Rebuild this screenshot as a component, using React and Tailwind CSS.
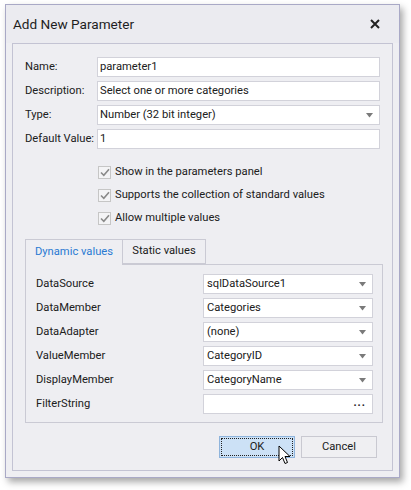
import React from 'react';

const font = { fontFamily: 'Roboto, "Liberation Sans", sans-serif' };

function Arrow() {
  return (
    <svg width="7" height="5" viewBox="0 0 7 5" className="shrink-0">
      <path d="M0 0 H7 L3.5 4.5 Z" fill="#7a7a7a" />
    </svg>
  );
}

function Field({ label, value, combo }) {
  return (
    <div className="flex items-center h-[20px]">
      <div className="w-[72px] shrink-0 whitespace-nowrap">{label}</div>
      <div className="flex-1 h-[20px] bg-white border border-[#d2d2da] flex items-center pl-[2px] pr-[6px]">
        <span className="flex-1">{value}</span>
        {combo && <Arrow />}
      </div>
    </div>
  );
}

function Check({ label }) {
  return (
    <div className="flex items-center h-[22px]">
      <div className="w-[13px] h-[13px] border border-[#c6c6c6] bg-[#f4f4f6] flex items-center justify-center">
        <svg width="10" height="9" viewBox="0 0 10 9">
          <path d="M1 4.5 L3.8 7.3 L9 1.2" stroke="#8a8a8a" strokeWidth="1.6" fill="none" />
        </svg>
      </div>
      <span className="ml-[4px]">{label}</span>
    </div>
  );
}

function Row({ label, value, ellipsis }) {
  return (
    <div className="flex items-center h-[20px]">
      <div className="flex-1">{label}</div>
      <div className="w-[170px] h-[20px] bg-white border border-[#d2d2da] flex items-center pl-[3px] pr-[6px]">
        <span className="flex-1">{value}</span>
        {ellipsis ? (
          <span className="font-bold tracking-[1px] text-[11px] leading-none pb-[4px]">...</span>
        ) : (
          <Arrow />
        )}
      </div>
    </div>
  );
}

export default function App() {
  return (
    <div className="w-[411px] h-[490px] bg-white relative text-[11.2px] text-[#202020]" style={font}>
      <div className="absolute left-[5px] top-[4px] w-[395px] h-[474px] bg-[#eeeef2] border border-[#a9a9c6] shadow-[3px_4px_7px_rgba(0,0,0,0.35)] flex flex-col">
        {/* title bar */}
        <div className="h-[38px] flex items-center pl-[7px] pr-[19px] bg-[#ebebf0]">
          <span className="flex-1 text-[13.6px] text-[#1e1e1e]">Add New Parameter</span>
          <svg width="10" height="10" viewBox="0 0 10 10">
            <path d="M1 1 L9 9 M9 1 L1 9" stroke="#222" strokeWidth="2" />
          </svg>
        </div>
        {/* content panel */}
        <div className="mx-[6px] mb-[6px] flex-1 border border-[#c3c3d3] bg-[#eeeef2] px-[12px] pt-[13px] flex flex-col">
          <div className="flex flex-col gap-[4px]">
            <Field label="Name:" value="parameter1" />
            <Field label="Description:" value="Select one or more categories" />
            <Field label="Type:" value="Number (32 bit integer)" combo />
            <Field label="Default Value:" value="1" />
          </div>
          <div className="flex flex-col pl-[73px] mt-[12px] gap-[1px]">
            <Check label="Show in the parameters panel" />
            <Check label="Supports the collection of standard values" />
            <Check label="Allow multiple values" />
          </div>
          {/* tabs */}
          <div className="mt-[9px] mr-[-3px] flex flex-col">
            <div className="flex h-[26px] relative top-[1px]">
              <div className="w-[98px] border border-[#cacad4] border-b-0 bg-[#eeeef2] text-[#2a7ad2] flex items-center justify-center">
                Dynamic values
              </div>
              <div className="w-[83px] border border-[#cacad4] border-l-0 bg-[#eeeef2] flex items-center justify-center h-[25px]">
                Static values
              </div>
            </div>
            <div className="border border-[#cacad4] pl-[10px] pr-[9px] pt-[9px] pb-[8px] flex flex-col gap-[4px]">
              <Row label="DataSource" value="sqlDataSource1" />
              <Row label="DataMember" value="Categories" />
              <Row label="DataAdapter" value="(none)" />
              <Row label="ValueMember" value="CategoryID" />
              <Row label="DisplayMember" value="CategoryName" />
              <Row label="FilterString" value="" ellipsis />
            </div>
          </div>
          {/* buttons */}
          <div className="flex justify-end gap-[6px] mt-[13px] pr-[3px]">
            <div className="relative w-[76px] h-[22px] bg-[#cce1f6] border border-[#8fb4dc] flex items-center justify-center">
              <div className="absolute inset-[1px] border border-dotted border-[#222]" />
              <span className="relative">OK</span>
              <svg className="absolute left-[58px] top-[8px]" width="14" height="21" viewBox="0 0 14 21">
                <path d="M1 1 L1 16 L4.5 12.5 L7 18.5 L9.5 17.5 L7 11.5 L12 11.5 Z" fill="#fff" stroke="#000" strokeWidth="1" strokeLinejoin="round" />
              </svg>
            </div>
            <div className="w-[76px] h-[22px] bg-[#efeff2] border border-[#c9c9d1] flex items-center justify-center">
              Cancel
            </div>
          </div>
        </div>
      </div>
    </div>
  );
}
